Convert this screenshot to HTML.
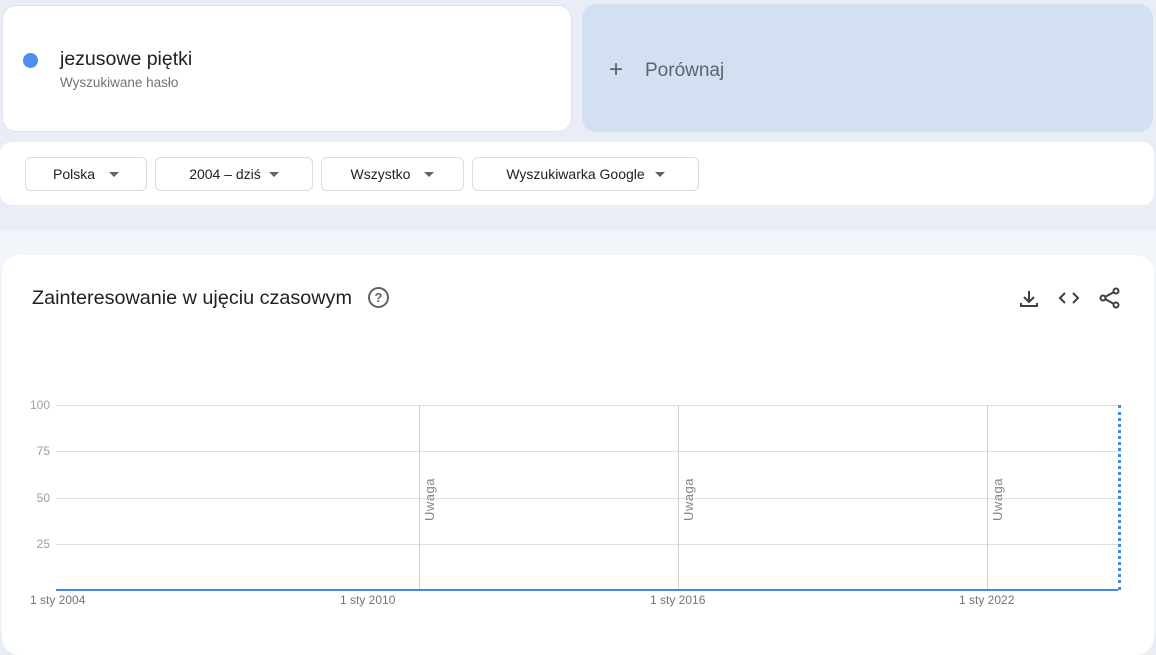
<!DOCTYPE html>
<html><head><meta charset="utf-8"><style>
body{margin:0;width:1156px;height:633px;background:#e9eef6;font-family:"Liberation Sans",Arial,sans-serif;position:relative;overflow:hidden}
.abs{position:absolute}
.card1{left:2px;top:5px;width:570px;height:127px;background:#fff;border-radius:14px;border:1px solid #dde2ea;box-sizing:border-box}
.card2{left:582px;top:4px;width:571px;height:128px;background:#d3e0f2;border-radius:14px}
.filt{left:0;top:142px;width:1154px;height:63px;background:#fff;border-radius:12px}
.btn{top:157px;height:34px;border:1px solid #dadce0;border-radius:6px;box-sizing:border-box;font-size:14px;color:#202124;display:flex;align-items:center;justify-content:center;background:#fff}
.tri{display:inline-block;width:0;height:0;border-left:5px solid transparent;border-right:5px solid transparent;border-top:5px solid #5f6368;margin-left:14px}
.lower{left:0;top:230px;width:1156px;height:403px;background:#f2f5fa}
.main{left:2px;top:255px;width:1152px;height:400px;background:#fff;border-radius:18px}
.yl{font-size:12px;color:#9aa0a6;width:50px;text-align:right;left:0}
.hl{left:56px;width:1066px;height:1px;background:#e0e0e0}
.vl{width:1px;background:#d0d0d0;top:405px;height:185px}
.xl{font-size:12px;color:#70757a;top:593px}
.uw{font-size:13px;color:#80868b;transform:rotate(-90deg);transform-origin:left top}
</style></head><body>
<div class="abs card1"></div>
<div class="abs" style="left:23px;top:53px;width:15px;height:15px;border-radius:50%;background:#4e8ff0"></div>
<div class="abs" style="left:60px;top:48px;font-size:19.5px;color:#202124">jezusowe piętki</div>
<div class="abs" style="left:60px;top:75px;font-size:13.5px;color:#70757a">Wyszukiwane hasło</div>
<div class="abs card2"></div>
<div class="abs" style="left:609px;top:58px;font-size:24px;color:#5f6368;line-height:24px;font-weight:300">+</div>
<div class="abs" style="left:645px;top:60px;font-size:19px;color:#5f6368">Porównaj</div>
<div class="abs filt"></div>
<div class="abs btn" style="left:25px;width:122px">Polska<span class="tri"></span></div>
<div class="abs btn" style="left:155px;width:158px">2004 – dziś<span class="tri" style="margin-left:8px"></span></div>
<div class="abs btn" style="left:321px;width:143px">Wszystko<span class="tri"></span></div>
<div class="abs btn" style="left:472px;width:227px">Wyszukiwarka Google<span class="tri" style="margin-left:10px"></span></div>
<div class="abs lower"></div>
<div class="abs main"></div>
<div class="abs" style="left:32px;top:287px;font-size:19.8px;color:#202124">Zainteresowanie w ujęciu czasowym</div>
<div class="abs" style="left:368px;top:287px;width:17px;height:17px;border:2px solid #5f6368;border-radius:50%;font-size:13px;font-weight:bold;color:#5f6368;text-align:center;line-height:17px">?</div>
<svg class="abs" style="left:1015px;top:286px" width="110" height="24" viewBox="0 0 110 24" fill="none" stroke="#3c4043" stroke-width="2">
<path d="M14 5v10M9 11l5 5 5-5M6 17v3h16v-3"/>
<path d="M50 7l-5 5 5 5M58 7l5 5-5 5"/>
<circle cx="101" cy="5" r="2.5"/><circle cx="88" cy="12" r="2.5"/><circle cx="101" cy="19" r="2.5"/><path d="M90 11l9-5M90 13l9 5"/>
</svg>
<div class="abs hl" style="top:405px"></div>
<div class="abs hl" style="top:451px"></div>
<div class="abs hl" style="top:498px"></div>
<div class="abs hl" style="top:544px"></div>
<div class="abs yl" style="top:398px">100</div>
<div class="abs yl" style="top:444px">75</div>
<div class="abs yl" style="top:491px">50</div>
<div class="abs yl" style="top:537px">25</div>
<div class="abs vl" style="left:419px"></div>
<div class="abs vl" style="left:678px"></div>
<div class="abs vl" style="left:987px"></div>
<div class="abs uw" style="left:422px;top:521px;letter-spacing:0.5px">Uwaga</div>
<div class="abs uw" style="left:681px;top:521px;letter-spacing:0.5px">Uwaga</div>
<div class="abs uw" style="left:990px;top:521px;letter-spacing:0.5px">Uwaga</div>
<div class="abs" style="left:56px;top:589px;width:1062px;height:2px;background:#4a86e8"></div>
<div class="abs" style="left:1118px;top:405px;height:185px;border-left:3px dotted #4a86e8"></div>
<div class="abs xl" style="left:30px">1 sty 2004</div>
<div class="abs xl" style="left:340px">1 sty 2010</div>
<div class="abs xl" style="left:650px">1 sty 2016</div>
<div class="abs xl" style="left:959px">1 sty 2022</div>
</body></html>
